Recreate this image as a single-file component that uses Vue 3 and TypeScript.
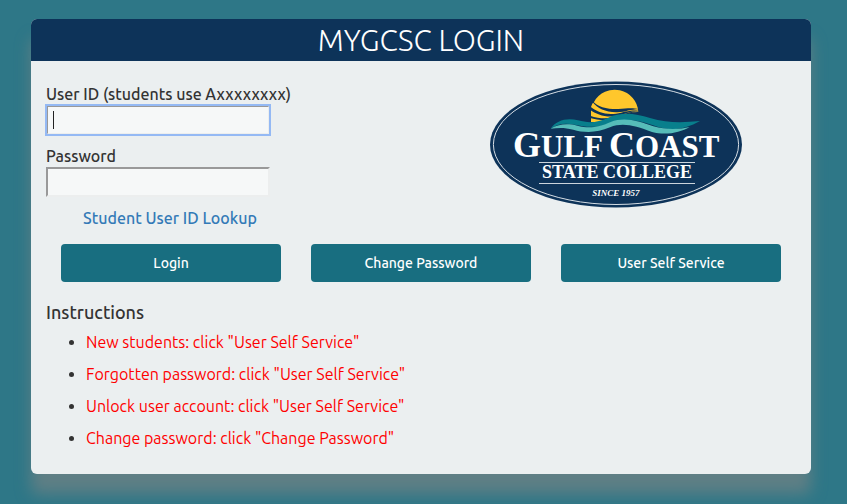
<script setup lang="ts">
import { onMounted, ref } from 'vue'

const userId = ref('')
const password = ref('')
const userField = ref<HTMLInputElement | null>(null)

const instructions: string[] = [
  'New students: click "User Self Service"',
  'Forgotten password: click "User Self Service"',
  'Unlock user account: click "User Self Service"',
  'Change password: click "Change Password"',
]

onMounted(() => userField.value?.focus())
</script>

<template>
  <main class="page">
    <form class="card" @submit.prevent>
      <h1 class="title">MYGCSC LOGIN</h1>
      <div class="body">
        <div class="top">
          <div class="fields">
            <label for="user-id">User ID (students use Axxxxxxxx)</label>
            <div class="control" :class="{ empty: !userId }">
              <input id="user-id" ref="userField" v-model="userId" type="text" autocomplete="off" />
            </div>
            <label for="password">Password</label>
            <div class="control">
              <input id="password" v-model="password" type="password" />
            </div>
            <a class="lookup" href="#lookup">Student User ID Lookup</a>
          </div>
          <div class="brand">
            <svg class="logo" viewBox="0 0 252 127" role="img" aria-label="Gulf Coast State College, since 1957">
              <ellipse cx="126" cy="63.5" rx="126" ry="63" fill="#0d3359" />
              <ellipse cx="126" cy="63.5" rx="122.6" ry="60" fill="none" stroke="#d5dde4" stroke-width="1" />
              <g transform="scale(.33333) translate(-30 -33)">
                <path fill="#ffc72c" d="M333 156V111Q336 99 342 96A71 71 0 0 1 475 126C438 124 400 158 358 157Z" />
                <g fill="#0d3359">
                  <path d="M338 92C350 111 385 118 415 117C440 116 455 112 478 118C450 118 438 126 412 127C378 128 352 115 338 97Z" />
                  <path d="M330 109C350 127 378 135 408 131C435 126 450 119 478 122C448 123 437 132 412 138C376 144 350 133 330 119Z" />
                  <path d="M330 137C360 147 386 147 412 139C438 130 455 122 478 125C448 127 428 139 404 147C375 155 350 149 330 144Z" />
                </g>
                <path fill="#087f8c" d="M212 176C228 151 261 142 294 151C327 160 352 158 385 143C424 125 465 130 510 144C563 160 610 158 660 153C619 176 578 185 532 170C480 152 438 142 392 158C350 176 318 171 284 164C252 158 232 162 212 176Z" />
                <path fill="#56bdb9" d="M212 176C232 163 261 158 292 167C325 175 352 174 392 156C432 140 475 152 520 169C560 180 600 178 629 171C600 188 557 197 516 186C466 168 430 156 390 172C350 190 310 188 280 179C250 171 232 174 212 176Z" />
              </g>
              <g fill="#fff" class="words">
                <text x="23" y="76" class="name"><tspan class="big">G</tspan>ULF</text>
                <text x="119" y="76" class="name"><tspan class="big">C</tspan>OAST</text>
                <text x="127" y="97" class="sub">STATE COLLEGE</text>
                <text x="126" y="115" class="since">SINCE 1957</text>
              </g>
              <path d="M49 81.5H205M49 102.5H205" stroke="#cbd4dc" stroke-width="1" />
            </svg>
          </div>
        </div>
        <div class="actions">
          <button type="submit">Login</button>
          <button type="button">Change Password</button>
          <button type="button">User Self Service</button>
        </div>
        <h2>Instructions</h2>
        <ul>
          <li v-for="item in instructions" :key="item"><span>{{ item }}</span></li>
        </ul>
      </div>
    </form>
  </main>
</template>

<style>
body {
  margin: 0;
  background: #2e7787;
}
</style>

<style scoped>
.page {
  padding: 19px 36px 30px 31px;
  color: #333;
  font-family: Ubuntu, "Noto Sans", "Open Sans", sans-serif;
  font-size: 16px;
}
.card {
  border-radius: 6px;
  background: #ebeff0;
  box-shadow: 0 20px 15px #5f7f85;
}
.title {
  margin: 0;
  border-radius: 6px 6px 0 0;
  background: #0d3359;
  color: #fff;
  font-size: 30px;
  font-weight: 300;
  line-height: 42px;
  text-align: center;
}
.body {
  padding: 20px 15px;
}
.top {
  display: grid;
  grid-template-columns: 248px 1fr;
}
.fields {
  display: flex;
  flex-direction: column;
  padding-top: 2px;
}
label {
  font-weight: 500;
  line-height: 22px;
  white-space: nowrap;
}
.control {
  position: relative;
  width: 224px;
  margin-bottom: 10px;
}
input {
  display: block;
  box-sizing: border-box;
  width: 100%;
  height: 30px;
  padding: 2px 5px;
  border: 2px solid;
  border-color: #999 #eceeee #eceeee #999;
  background: #f6f8f8;
  color: #333;
  font: inherit;
  caret-color: transparent;
}
input:focus {
  outline: 2px solid #94b9f4;
  outline-offset: -1px;
}
.control.empty:focus-within::after {
  content: "";
  position: absolute;
  top: 6px;
  left: 7px;
  width: 1px;
  height: 18px;
  background: #222;
}
.lookup {
  align-self: center;
  color: #337ab7;
  font-weight: 500;
  line-height: 22px;
  text-decoration: none;
}
.brand {
  display: flex;
  align-items: flex-start;
  justify-content: center;
  padding-left: 142px;
}
.logo {
  width: 252px;
  height: 127px;
}
.words {
  font-family: "Liberation Serif", serif;
}
.name {
  font-size: 31px;
  font-weight: 700;
}
.big {
  font-size: 36px;
}
.sub {
  font-size: 18px;
  font-weight: 700;
  text-anchor: middle;
}
.since {
  font-size: 9px;
  font-style: italic;
  font-weight: 700;
  text-anchor: middle;
}
.actions {
  display: grid;
  grid-template-columns: repeat(3, 1fr);
  gap: 30px;
  padding: 15px 15px 18px;
}
button {
  height: 38px;
  border: 0;
  border-radius: 4px;
  background: #186e80;
  color: #fff;
  font: 500 14px Ubuntu, "Noto Sans", "Open Sans", sans-serif;
}
h2 {
  margin: 0;
  font-size: 18px;
  font-weight: 500;
  line-height: 24px;
}
ul {
  margin: 2px 0 0;
  padding: 0 0 0 40px;
}
li {
  line-height: 32px;
}
li span {
  color: #f00;
}
</style>
